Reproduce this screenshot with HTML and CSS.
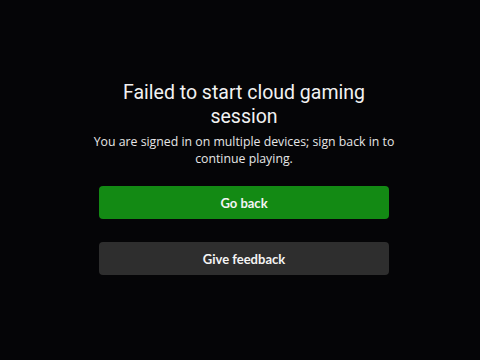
FILE: index.html
```html
<!DOCTYPE html>
<html>
<head>
<meta charset="utf-8">
<link rel="stylesheet" href="styles.css">
</head>
<body>
<main class="dialog">
  <h1 class="title">Failed to start cloud gaming session</h1>
  <p class="message">You are signed in on multiple devices; sign back in to continue playing.</p>
  <div class="actions">
    <button class="btn btn-primary">Go back</button>
    <button class="btn btn-secondary">Give feedback</button>
  </div>
</main>
</body>
</html>
```

FILE: styles.css
```css
html, body {
  margin: 0;
  padding: 0;
  background: #050507;
  width: 480px;
  height: 360px;
  overflow: hidden;
}
.dialog {
  display: flex;
  flex-direction: column;
  align-items: center;
  padding: 81px 0 0 8px;
}
.title {
  margin: 0;
  width: 290px;
  font-family: Roboto, "Liberation Sans", sans-serif;
  font-weight: 400;
  font-size: 19.5px;
  line-height: 24px;
  color: #f2f2f2;
  text-align: center;
}
.message {
  margin: 4px 0 0;
  width: 310px;
  font-family: "Open Sans", "Liberation Sans", sans-serif;
  font-size: 12.3px;
  line-height: 17px;
  color: #e6e6e6;
  text-align: center;
}
.actions {
  display: flex;
  flex-direction: column;
  gap: 23px;
  margin-top: 19px;
  width: 290px;
}
.btn {
  height: 33px;
  border: none;
  border-radius: 4px;
  font-family: Lato, "Liberation Sans", sans-serif;
  font-weight: 700;
  font-size: 13px;
  color: #f4f4f4;
  padding: 0;
}
.btn-primary {
  background: #138a14;
}
.btn-secondary {
  background: #2e2e2e;
}
```
